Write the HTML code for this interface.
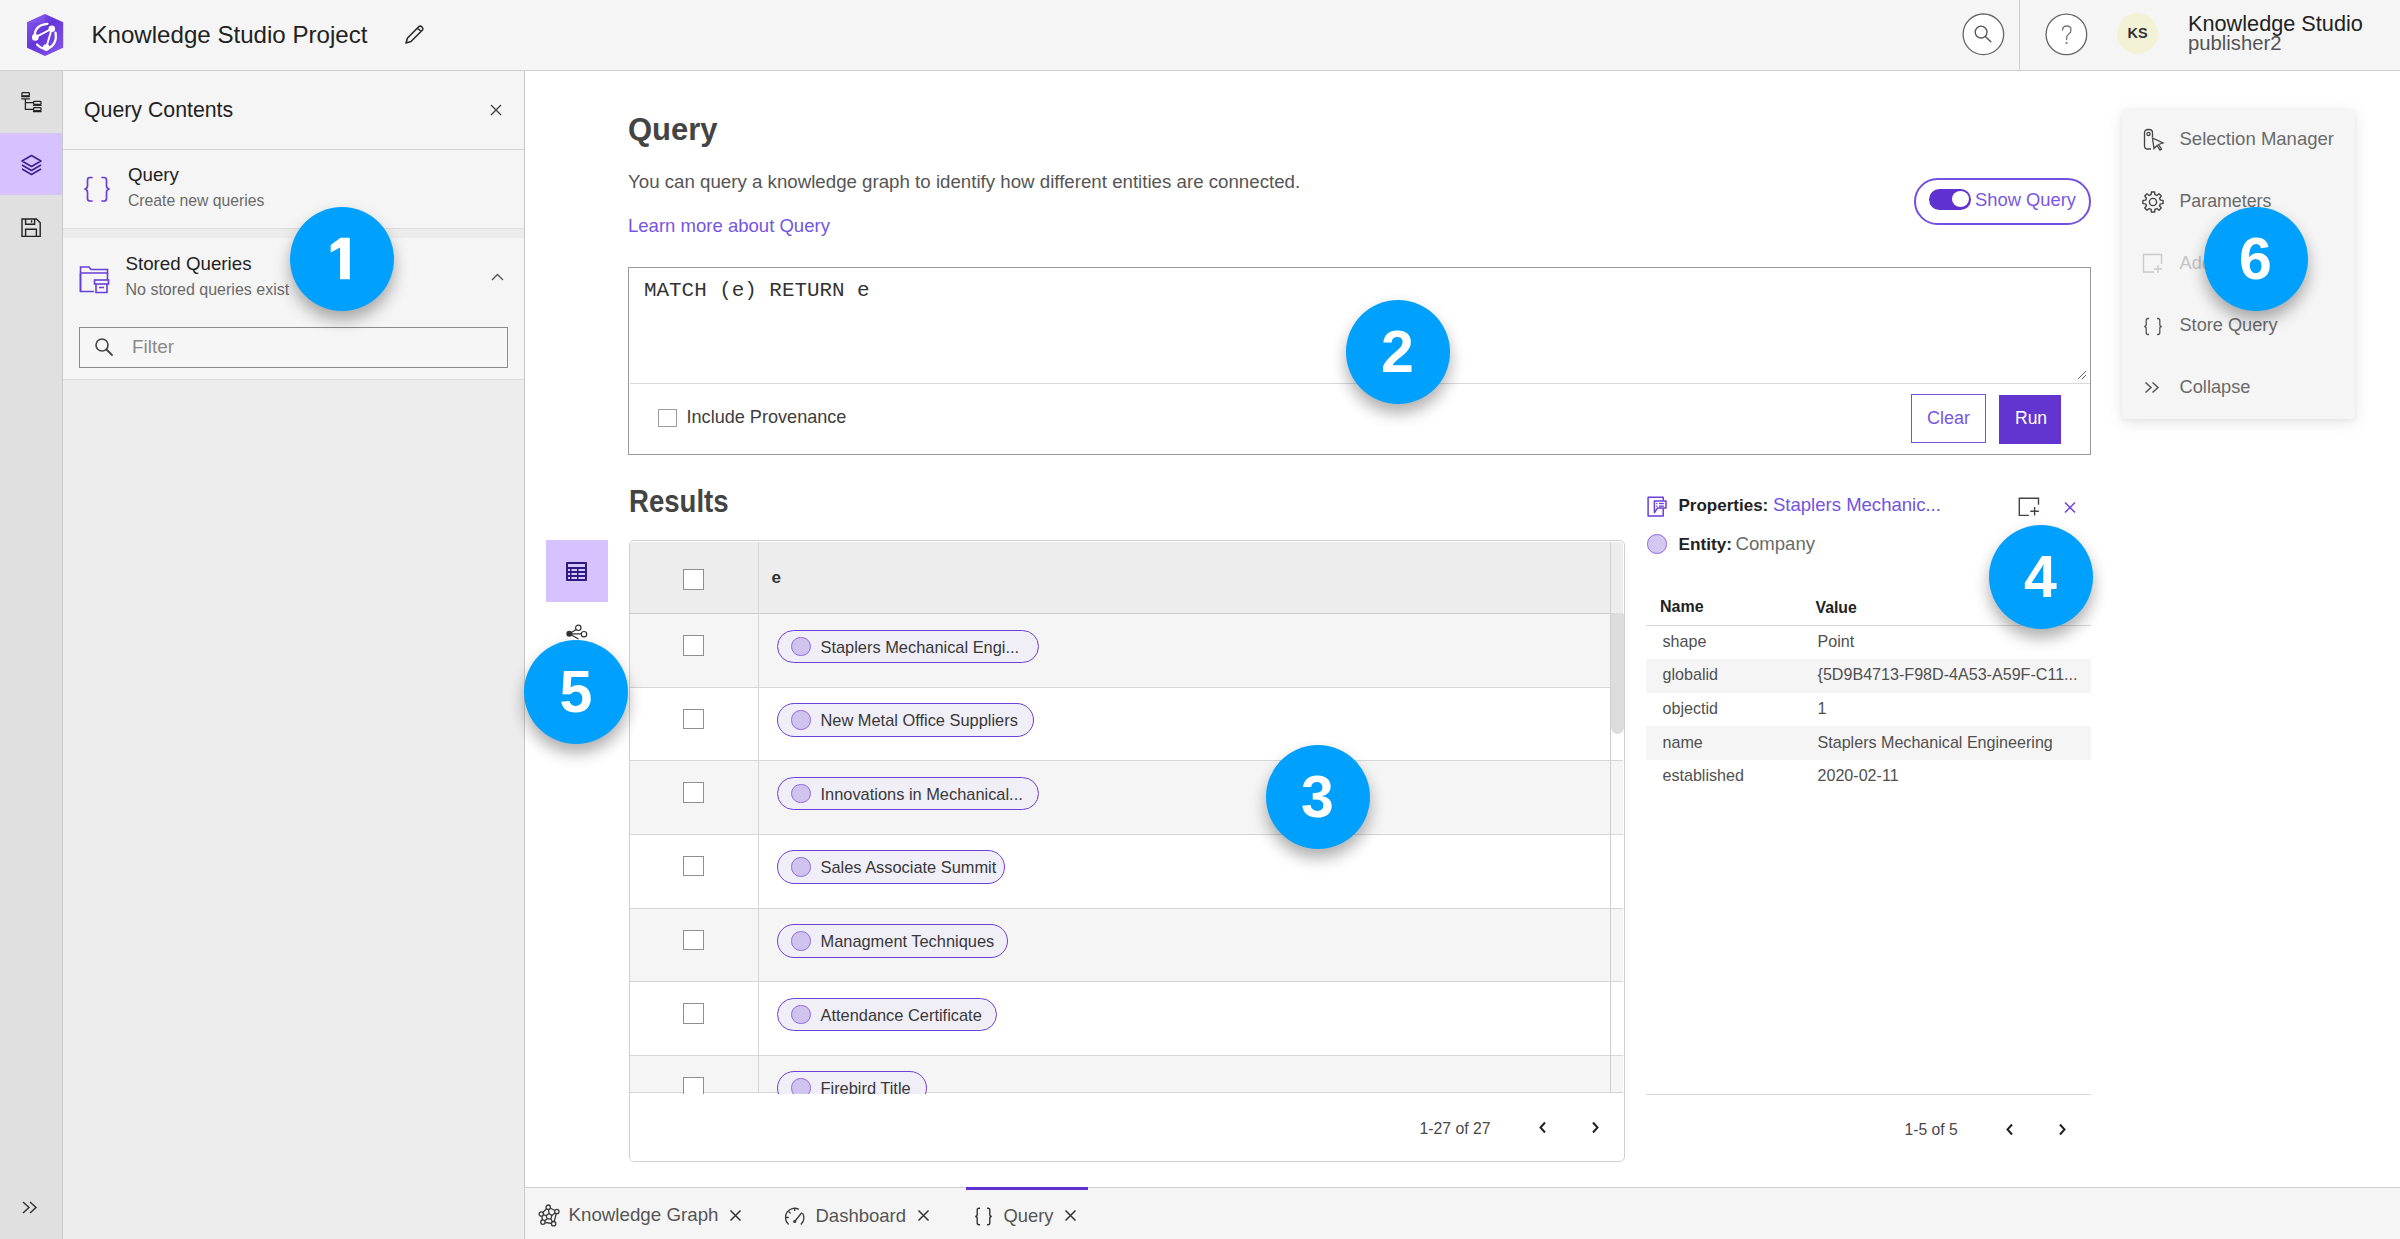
<!DOCTYPE html>
<html><head><meta charset="utf-8"><title>Knowledge Studio Project - Query</title>
<style>
html,body{margin:0;padding:0;}
body{width:2400px;height:1239px;position:relative;overflow:hidden;background:#fff;font-family:"Liberation Sans",sans-serif;color:#151515;}
.a{position:absolute;box-sizing:border-box;}
.t{position:absolute;line-height:1;white-space:nowrap;}
svg.a{overflow:visible;}
</style></head><body>
<div class="a" style="left:0px;top:0px;width:2400px;height:70px;background:#f5f5f5;"></div><div class="a" style="left:0px;top:70px;width:2400px;height:1px;background:#cfcfcf;"></div><div class="a" style="left:0px;top:71px;width:62px;height:1168px;background:#e0e0e0;"></div><div class="a" style="left:62px;top:71px;width:1px;height:1168px;background:#c9c9c9;"></div><div class="a" style="left:0px;top:133px;width:62px;height:62px;background:#d5c2ff;"></div><div class="a" style="left:63px;top:71px;width:461px;height:1168px;background:#ededed;"></div><div class="a" style="left:63px;top:71px;width:461px;height:308px;background:#f5f5f5;"></div><div class="a" style="left:63px;top:149px;width:461px;height:1px;background:#d4d4d4;"></div><div class="a" style="left:63px;top:228px;width:461px;height:1px;background:#dcdcdc;"></div><div class="a" style="left:63px;top:229px;width:461px;height:9px;background:#ececec;"></div><div class="a" style="left:63px;top:379px;width:461px;height:1px;background:#dcdcdc;"></div><div class="a" style="left:524px;top:71px;width:1px;height:1168px;background:#c9c9c9;"></div><div class="a" style="left:525px;top:1187px;width:1875px;height:52px;background:#f5f5f5;"></div><div class="a" style="left:525px;top:1187px;width:1875px;height:1px;background:#cfcfcf;"></div><svg class="a" style="left:26px;top:13px;" width="39" height="44" viewBox="0 0 39 44">
<defs><linearGradient id="lg" x1="0" y1="0" x2="1" y2="1">
<stop offset="0" stop-color="#8a5cf0"/><stop offset="0.45" stop-color="#6536d8"/><stop offset="1" stop-color="#8759ef"/></linearGradient></defs>
<path d="M19 1 L37.2 9.3 L37.2 34.7 L19 43 L1 34.7 L1 9.3 Z" fill="url(#lg)"/>
<path d="M19 1 L19 10 L1 9.3 Z" fill="#9066f2" opacity="0.35"/>
<path d="M8.6 23.5 C8.5 16 13 11.5 21.5 10.8" stroke="#fff" stroke-width="2.2" fill="none" stroke-linecap="round"/>
<path d="M9.3 24.4 L25.8 15.7 L20.3 34.6" stroke="#fff" stroke-width="1.9" fill="none" stroke-linecap="round"/>
<path d="M29.5 19.5 C31 27 28 33.5 22 35.5 C18 36.5 14.5 35 11 31.5" stroke="#fff" stroke-width="2.2" fill="none" stroke-linecap="round"/>
<circle cx="9.3" cy="24.4" r="3.3" fill="#fff"/><circle cx="25.8" cy="15.7" r="3.3" fill="#fff"/><circle cx="20.3" cy="34.6" r="3.3" fill="#fff"/>
</svg><span class="t" style="left:91.5px;top:22.8px;font-size:24.1px;color:#222;">Knowledge Studio Project</span><svg class="a" style="left:403px;top:24px;" width="22" height="22" viewBox="0 0 22 22"><path d="M3 19 L4.5 14 L16 2.5 Q17.5 1.5 19 3 Q20.5 4.5 19.5 6 L8 17.5 Z M14.5 4 L18 7.5" stroke="#2b2b2b" stroke-width="1.6" fill="none" stroke-linejoin="round"/></svg><svg class="a" style="left:1962px;top:12.5px;" width="43" height="43" viewBox="0 0 43 43"><circle cx="21.4" cy="21.3" r="20.3" stroke="#666" stroke-width="1.3" fill="#fff"/><circle cx="19.1" cy="19.1" r="5.9" stroke="#555" stroke-width="1.3" fill="none"/><path d="M23.4 23.4 L28.8 28.8" stroke="#555" stroke-width="1.4" stroke-linecap="round"/></svg><div class="a" style="left:2019px;top:0px;width:1px;height:70px;background:#cfcfcf;"></div><svg class="a" style="left:2045px;top:13px;" width="43" height="43" viewBox="0 0 43 43"><circle cx="21.4" cy="21.4" r="20.3" stroke="#666" stroke-width="1.3" fill="#fff"/><path d="M17.6 17 Q17.6 13 21.8 13 Q26 13 26 17 Q26 19.5 23.5 21.2 Q21.6 22.6 21.6 25.5 V26.5" stroke="#777" stroke-width="1.3" fill="none" stroke-linecap="round"/><circle cx="21.6" cy="30" r="1.1" fill="#777"/></svg><div class="a" style="left:2117.3px;top:13px;width:40.5px;height:40.5px;background:#f3f1d6;border-radius:50%;"></div><span class="t" style="left:2127.5px;top:25.6px;font-size:14.5px;color:#333;font-weight:700;">KS</span><span class="t" style="left:2188.0px;top:12.7px;font-size:21.7px;color:#222;">Knowledge Studio</span><span class="t" style="left:2188.0px;top:33.3px;font-size:20.3px;color:#555;">publisher2</span><svg class="a" style="left:15px;top:85px;" width="32" height="35" viewBox="0 0 32 35"><g stroke="#222" stroke-width="1.3" fill="none"><rect x="6.9" y="7.7" width="7.4" height="3.2" rx="0.8"/><path d="M6.2 11.5 H14.9 M6.2 13.9 H14.9 M10.4 13.9 V24.4 H18 M10.4 17.7 H18"/><rect x="18.6" y="16.4" width="7.4" height="3" rx="0.8"/><path d="M17.9 20.3 H26.6"/><rect x="18.6" y="22.6" width="7.4" height="3" rx="0.8"/><path d="M17.9 26.6 H26.6"/></g></svg><svg class="a" style="left:20px;top:154px;" width="23" height="23" viewBox="0 0 23 23"><g stroke="#3b2090" stroke-width="1.5" fill="none" stroke-linejoin="round"><path d="M11.5 1.5 L21 7 L11.5 12.5 L2 7 Z"/><path d="M2 11 L11.5 16.5 L21 11"/><path d="M2 15 L11.5 20.5 L21 15"/></g></svg><svg class="a" style="left:21.3px;top:218.3px;" width="21" height="21" viewBox="0 0 21 21"><g stroke="#222" stroke-width="1.4" fill="none"><path d="M1 1 H15.5 L19.2 4.7 V18.4 H1 Z"/><path d="M4.6 1 V6.3 H13.6 V1"/><path d="M4.6 18.4 V11.3 H15.4 V18.4"/><path d="M10.6 2.3 V4.6"/></g></svg><svg class="a" style="left:21px;top:1200px;" width="18" height="16" viewBox="0 0 18 16"><path d="M2 2 L8 7.5 L2 13 M9 2 L15 7.5 L9 13" stroke="#333" stroke-width="1.5" fill="none"/></svg><span class="t" style="left:84.0px;top:99.8px;font-size:21.3px;color:#222;">Query Contents</span><svg class="a" style="left:489px;top:103px;" width="14" height="14" viewBox="0 0 14 14"><path d="M2 2 L12 12 M12 2 L2 12" stroke="#444" stroke-width="1.4"/></svg><svg class="a" style="left:83px;top:176px;" width="28" height="27" viewBox="0 0 28 27"><g stroke="#6a3ed8" stroke-width="1.7" fill="none" stroke-linecap="round"><path d="M9 1.5 H7 Q4.5 1.5 4.5 4 V10 Q4.5 12.5 1.5 13 Q4.5 13.5 4.5 16 V22.5 Q4.5 25 7 25 H9"/><path d="M19 1.5 H21 Q23.5 1.5 23.5 4 V10 Q23.5 12.5 26.5 13 Q23.5 13.5 23.5 16 V22.5 Q23.5 25 21 25 H19"/></g></svg><span class="t" style="left:128.0px;top:166.1px;font-size:18.7px;color:#222;">Query</span><span class="t" style="left:128.0px;top:193.0px;font-size:15.74px;color:#6a6a6a;">Create new queries</span><svg class="a" style="left:79px;top:265px;" width="32" height="29" viewBox="0 0 32 29"><g stroke="#6a3ed8" stroke-width="1.6" fill="none"><path d="M1.5 26.5 V2 H10 L12 4.5 H28.5 V8 H1.5"/><path d="M1.5 8 V26.5 H15"/><path d="M28.5 8 V15"/><rect x="15.5" y="15" width="14" height="4"/><path d="M17 19 V27.5 H28 V19 M20 22.5 H25"/></g></svg><span class="t" style="left:125.5px;top:254.8px;font-size:18.74px;color:#222;">Stored Queries</span><span class="t" style="left:125.5px;top:282.2px;font-size:16.0px;color:#6a6a6a;">No stored queries exist</span><svg class="a" style="left:490px;top:272px;" width="15" height="10" viewBox="0 0 15 10"><path d="M2 8 L7.5 2.5 L13 8" stroke="#555" stroke-width="1.4" fill="none"/></svg><div class="a" style="left:79px;top:327px;width:429px;height:41px;border:1.5px solid #8c8c8c;background:#f6f6f6;"></div><svg class="a" style="left:94px;top:337px;" width="20" height="20" viewBox="0 0 20 20"><circle cx="8" cy="8" r="6" stroke="#444" stroke-width="1.6" fill="none"/><path d="M12.5 12.5 L18 18" stroke="#444" stroke-width="1.8" stroke-linecap="round"/></svg><span class="t" style="left:132.0px;top:338.0px;font-size:18.9px;color:#8a8a8a;">Filter</span><span class="t" style="left:628.0px;top:114.3px;font-size:31px;color:#444;font-weight:700;">Query</span><span class="t" style="left:628.0px;top:172.6px;font-size:18.7px;color:#555;">You can query a knowledge graph to identify how different entities are connected.</span><span class="t" style="left:628.0px;top:216.5px;font-size:18.54px;color:#7656e0;">Learn more about Query</span><div class="a" style="left:1914px;top:178px;width:177px;height:46.5px;border:2px solid #7550df;border-radius:24px;"></div><div class="a" style="left:1929px;top:188.5px;width:42px;height:21px;background:#5f31d1;border-radius:11px;"></div><div class="a" style="left:1952px;top:191px;width:17px;height:16px;background:#fff;border-radius:50%;"></div><span class="t" style="left:1975.0px;top:190.5px;font-size:18.36px;color:#7a58e2;">Show Query</span><div class="a" style="left:628px;top:267px;width:1463px;height:188px;border:1.5px solid #9a9a9a;"></div><div class="a" style="left:629.5px;top:383px;width:1460px;height:1px;background:#d9d9d9;"></div><span class="t" style="left:644.0px;top:281.0px;font-size:20.9px;color:#333;font-family:'Liberation Mono',monospace;">MATCH (e) RETURN e</span><svg class="a" style="left:2075px;top:368px;" width="12" height="12" viewBox="0 0 12 12"><path d="M11 3 L3 11 M11 7 L7 11" stroke="#666" stroke-width="1"/></svg><div class="a" style="left:658px;top:408.5px;width:18.5px;height:18.5px;border:1.5px solid #9c9c9c;background:#fff;"></div><span class="t" style="left:686.5px;top:407.9px;font-size:18.1px;color:#3d3d3d;">Include Provenance</span><div class="a" style="left:1911px;top:394.3px;width:75px;height:49px;border:1.6px solid #7452de;background:#fff;"></div><span class="t" style="left:1927.0px;top:408.8px;font-size:18px;color:#7b55e3;">Clear</span><div class="a" style="left:1999px;top:394.5px;width:62px;height:49px;background:#6234d0;"></div><span class="t" style="left:2015.0px;top:410.1px;font-size:17.5px;color:#ffffff;">Run</span><span class="t" style="left:628.5px;top:486.3px;font-size:31.5px;color:#444;font-weight:700;transform:scaleX(0.875);transform-origin:0 0;">Results</span><div class="a" style="left:546px;top:540px;width:62px;height:62px;background:#d5c2ff;"></div><svg class="a" style="left:566px;top:562px;" width="21" height="19" viewBox="0 0 21 19"><rect x="0" y="0" width="21" height="19" rx="1" fill="#2e1a80"/><g fill="#d8c8ff"><rect x="2" y="2" width="17" height="3"/><rect x="2" y="7" width="2" height="2"/><rect x="5.5" y="7" width="5.5" height="2"/><rect x="12.5" y="7" width="6.5" height="2"/><rect x="2" y="11" width="2" height="2"/><rect x="5.5" y="11" width="5.5" height="2"/><rect x="12.5" y="11" width="6.5" height="2"/><rect x="2" y="15" width="2" height="2"/><rect x="5.5" y="15" width="5.5" height="2"/><rect x="12.5" y="15" width="6.5" height="2"/></g></svg><svg class="a" style="left:565px;top:623px;" width="24" height="19" viewBox="0 0 24 19"><g stroke="#333" stroke-width="1.2" fill="none"><circle cx="13.3" cy="4.8" r="2.7"/><circle cx="19" cy="11.2" r="2.7"/><path d="M4.3 10.8 L11.3 6.5 M4.3 10.8 H16.3 M4.3 10.8 L13.5 16"/></g><circle cx="4.3" cy="10.8" r="3" fill="#333"/></svg><div class="a" style="left:628.5px;top:540px;width:996px;height:622px;border:1.5px solid #cfcfcf;border-radius:5px;background:#fff;overflow:hidden;"></div><div class="a" style="left:630.0px;top:541.5px;width:993px;height:72px;background:#ededed;border-radius:4px 4px 0 0;"></div><div class="a" style="left:630.0px;top:612.5px;width:993px;height:1.5px;background:#cbcbcb;"></div><div class="a" style="left:630.0px;top:614px;width:993px;height:73.5px;background:#f5f5f5;"></div><div class="a" style="left:630.0px;top:686.5px;width:993px;height:1.5px;background:#d6d6d6;"></div><div class="a" style="left:630.0px;top:687.5px;width:993px;height:73.70000000000005px;background:#ffffff;"></div><div class="a" style="left:630.0px;top:760.2px;width:993px;height:1.5px;background:#d6d6d6;"></div><div class="a" style="left:630.0px;top:761.2px;width:993px;height:73.79999999999995px;background:#f5f5f5;"></div><div class="a" style="left:630.0px;top:834px;width:993px;height:1.5px;background:#d6d6d6;"></div><div class="a" style="left:630.0px;top:835px;width:993px;height:73.5px;background:#ffffff;"></div><div class="a" style="left:630.0px;top:907.5px;width:993px;height:1.5px;background:#d6d6d6;"></div><div class="a" style="left:630.0px;top:908.5px;width:993px;height:73.5px;background:#f5f5f5;"></div><div class="a" style="left:630.0px;top:981px;width:993px;height:1.5px;background:#d6d6d6;"></div><div class="a" style="left:630.0px;top:982px;width:993px;height:73.59999999999991px;background:#ffffff;"></div><div class="a" style="left:630.0px;top:1054.6px;width:993px;height:1.5px;background:#d6d6d6;"></div><div class="a" style="left:630.0px;top:1055.6px;width:993px;height:37.40000000000009px;background:#f5f5f5;"></div><div class="a" style="left:630.0px;top:1092.3px;width:993px;height:1.2px;background:#d4d4d4;"></div><div class="a" style="left:758px;top:541.5px;width:1.2px;height:551px;background:#d6d6d6;"></div><div class="a" style="left:1609.8px;top:541.5px;width:1.2px;height:551px;background:#cfcfcf;"></div><div class="a" style="left:1611px;top:613px;width:12.5px;height:121px;background:#dcdcdc;border-radius:2px 2px 6.5px 6.5px;"></div><div class="a" style="left:683px;top:569px;width:20.5px;height:20.5px;border:1.4px solid #8f8f8f;background:#fff;"></div><span class="t" style="left:771.5px;top:569.3px;font-size:17px;color:#333;font-weight:700;">e</span><div class="a" style="left:683px;top:635.0px;width:20.5px;height:20.5px;border:1.4px solid #8f8f8f;background:#fff;"></div><div class="a" style="left:777px;top:629.9px;width:261.5px;height:33.3px;border:1.6px solid #6c42d8;border-radius:17px;background:#f0eef7;"></div><div class="a" style="left:791.3px;top:636.8px;width:19.4px;height:19.4px;border:1.6px solid #8a6ae4;border-radius:50%;background:#d0c4ee;"></div><span class="t" style="left:820.5px;top:638.5px;font-size:16.4px;color:#383838;">Staplers Mechanical Engi...</span><div class="a" style="left:683px;top:708.5px;width:20.5px;height:20.5px;border:1.4px solid #8f8f8f;background:#fff;"></div><div class="a" style="left:777px;top:703.4px;width:256.5px;height:33.3px;border:1.6px solid #6c42d8;border-radius:17px;background:#f0eef7;"></div><div class="a" style="left:791.3px;top:710.3px;width:19.4px;height:19.4px;border:1.6px solid #8a6ae4;border-radius:50%;background:#d0c4ee;"></div><span class="t" style="left:820.5px;top:712.0px;font-size:16.4px;color:#383838;">New Metal Office Suppliers</span><div class="a" style="left:683px;top:782.0px;width:20.5px;height:20.5px;border:1.4px solid #8f8f8f;background:#fff;"></div><div class="a" style="left:777px;top:776.9px;width:261.5px;height:33.3px;border:1.6px solid #6c42d8;border-radius:17px;background:#f0eef7;"></div><div class="a" style="left:791.3px;top:783.8px;width:19.4px;height:19.4px;border:1.6px solid #8a6ae4;border-radius:50%;background:#d0c4ee;"></div><span class="t" style="left:820.5px;top:785.5px;font-size:16.4px;color:#383838;">Innovations in Mechanical...</span><div class="a" style="left:683px;top:855.5px;width:20.5px;height:20.5px;border:1.4px solid #8f8f8f;background:#fff;"></div><div class="a" style="left:777px;top:850.4px;width:228px;height:33.3px;border:1.6px solid #6c42d8;border-radius:17px;background:#f0eef7;"></div><div class="a" style="left:791.3px;top:857.3px;width:19.4px;height:19.4px;border:1.6px solid #8a6ae4;border-radius:50%;background:#d0c4ee;"></div><span class="t" style="left:820.5px;top:859.0px;font-size:16.4px;color:#383838;">Sales Associate Summit</span><div class="a" style="left:683px;top:929.5px;width:20.5px;height:20.5px;border:1.4px solid #8f8f8f;background:#fff;"></div><div class="a" style="left:777px;top:924.4px;width:231px;height:33.3px;border:1.6px solid #6c42d8;border-radius:17px;background:#f0eef7;"></div><div class="a" style="left:791.3px;top:931.3px;width:19.4px;height:19.4px;border:1.6px solid #8a6ae4;border-radius:50%;background:#d0c4ee;"></div><span class="t" style="left:820.5px;top:933.0px;font-size:16.4px;color:#383838;">Managment Techniques</span><div class="a" style="left:683px;top:1003.0px;width:20.5px;height:20.5px;border:1.4px solid #8f8f8f;background:#fff;"></div><div class="a" style="left:777px;top:997.9px;width:220px;height:33.3px;border:1.6px solid #6c42d8;border-radius:17px;background:#f0eef7;"></div><div class="a" style="left:791.3px;top:1004.8px;width:19.4px;height:19.4px;border:1.6px solid #8a6ae4;border-radius:50%;background:#d0c4ee;"></div><span class="t" style="left:820.5px;top:1006.5px;font-size:16.4px;color:#383838;">Attendance Certificate</span><div class="a" style="left:683px;top:1076.5px;width:20.5px;height:20.5px;border:1.4px solid #8f8f8f;background:#fff;"></div><div class="a" style="left:777px;top:1071.4px;width:150px;height:33.3px;border:1.6px solid #6c42d8;border-radius:17px;background:#f0eef7;"></div><div class="a" style="left:791.3px;top:1078.3px;width:19.4px;height:19.4px;border:1.6px solid #8a6ae4;border-radius:50%;background:#d0c4ee;"></div><span class="t" style="left:820.5px;top:1080.0px;font-size:16.4px;color:#383838;">Firebird Title</span><div class="a" style="left:630.0px;top:1093.5px;width:993px;height:67px;background:#fff;border-radius:0 0 4px 4px;"></div><span class="t" style="left:1419.5px;top:1121.3px;font-size:15.8px;color:#484848;">1-27 of 27</span><svg class="a" style="left:1538px;top:1121px;" width="10" height="13" viewBox="0 0 10 13"><path d="M7 1.5 L2.5 6.5 L7 11.5" stroke="#222" stroke-width="2" fill="none"/></svg><svg class="a" style="left:1590px;top:1121px;" width="10" height="13" viewBox="0 0 10 13"><path d="M3 1.5 L7.5 6.5 L3 11.5" stroke="#222" stroke-width="2" fill="none"/></svg><svg class="a" style="left:1640px;top:490px;" width="30" height="30" viewBox="0 0 30 30"><g stroke="#6a3ed8" stroke-width="1.5" fill="none" stroke-linejoin="round"><path d="M23.2 10.5 V7.3 H8.1 V26 H23.2 V18.6"/><path d="M14.4 22.6 V11 H26 V18.1 H17.5 Z"/></g><g fill="#6a3ed8"><rect x="16.2" y="12.9" width="1.3" height="1.3"/><rect x="16.2" y="15.5" width="1.3" height="1.3"/><rect x="19" y="12.9" width="4.8" height="1.3"/><rect x="19" y="15.5" width="4.8" height="1.3"/></g></svg><span class="t" style="left:1678.5px;top:497.4px;font-size:17px;color:#222;font-weight:700;">Properties:</span><span class="t" style="left:1773.0px;top:496.1px;font-size:18.54px;color:#7352df;">Staplers Mechanic...</span><svg class="a" style="left:2017px;top:496px;" width="24" height="22" viewBox="0 0 24 22"><g stroke="#444" stroke-width="1.4" fill="none"><path d="M11.8 19.4 H2.3 V2.3 H21.5 V8.8"/><path d="M17.6 11 V19.6 M13.3 15.3 H21.9"/></g></svg><svg class="a" style="left:2063px;top:501px;" width="14" height="13" viewBox="0 0 14 13"><path d="M2 1.5 L12 11.5 M12 1.5 L2 11.5" stroke="#6e45e0" stroke-width="1.5"/></svg><div class="a" style="left:1647px;top:534px;width:19.5px;height:19.5px;border:1.6px solid #8a6ae4;border-radius:50%;background:#d4c8f2;"></div><span class="t" style="left:1678.5px;top:536.4px;font-size:17.2px;color:#222;font-weight:700;">Entity:</span><span class="t" style="left:1735.5px;top:535.3px;font-size:18.6px;color:#6a6a6a;">Company</span><span class="t" style="left:1660.0px;top:599.4px;font-size:16px;color:#222;font-weight:700;">Name</span><span class="t" style="left:1815.5px;top:599.5px;font-size:15.8px;color:#222;font-weight:700;">Value</span><div class="a" style="left:1646px;top:624.5px;width:445px;height:1.2px;background:#d9d9d9;"></div><span class="t" style="left:1662.5px;top:632.8px;font-size:16.1px;color:#505050;">shape</span><span class="t" style="left:1817.5px;top:632.8px;font-size:16.1px;color:#505050;">Point</span><div class="a" style="left:1646px;top:659.2px;width:445px;height:33.59999999999991px;background:#f5f5f5;"></div><span class="t" style="left:1662.5px;top:666.3px;font-size:16.1px;color:#505050;">globalid</span><span class="t" style="left:1817.5px;top:666.3px;font-size:16.1px;color:#505050;">{5D9B4713-F98D-4A53-A59F-C11...</span><span class="t" style="left:1662.5px;top:699.9px;font-size:16.1px;color:#505050;">objectid</span><span class="t" style="left:1817.5px;top:699.9px;font-size:16.1px;color:#505050;">1</span><div class="a" style="left:1646px;top:726.4px;width:445px;height:33.80000000000007px;background:#f5f5f5;"></div><span class="t" style="left:1662.5px;top:733.5px;font-size:16.1px;color:#505050;">name</span><span class="t" style="left:1817.5px;top:733.5px;font-size:16.1px;color:#505050;">Staplers Mechanical Engineering</span><span class="t" style="left:1662.5px;top:767.3px;font-size:16.1px;color:#505050;">established</span><span class="t" style="left:1817.5px;top:767.3px;font-size:16.1px;color:#505050;">2020-02-11</span><div class="a" style="left:1646px;top:1093.5px;width:445px;height:1.2px;background:#d9d9d9;"></div><span class="t" style="left:1904.5px;top:1122.4px;font-size:15.7px;color:#484848;">1-5 of 5</span><svg class="a" style="left:2005px;top:1122.5px;" width="10" height="13" viewBox="0 0 10 13"><path d="M7 1.5 L2.5 6.5 L7 11.5" stroke="#222" stroke-width="2" fill="none"/></svg><svg class="a" style="left:2057px;top:1122.5px;" width="10" height="13" viewBox="0 0 10 13"><path d="M3 1.5 L7.5 6.5 L3 11.5" stroke="#222" stroke-width="2" fill="none"/></svg><div class="a" style="left:2122px;top:109px;width:232.5px;height:309.5px;background:#f5f5f5;border-radius:3px;box-shadow:0 4px 16px rgba(0,0,0,0.10),0 1px 4px rgba(0,0,0,0.05);"></div><svg class="a" style="left:2142px;top:128px;" width="24" height="23" viewBox="0 0 24 23"><g stroke="#444" stroke-width="1.3" fill="none"><path d="M9 21 H5.5 Q2.5 21 2.5 18 V5 Q2.5 1.5 6 1.5 H7 Q10.5 1.5 10.5 5 V9"/><circle cx="6.5" cy="6" r="1.6"/><path d="M10.5 10 L21 15 L16.5 16.5 L19.5 21 L18 22 L15 17.5 L12 20.5 Z"/></g></svg><span class="t" style="left:2179.5px;top:129.8px;font-size:18.54px;color:#6a6a6a;">Selection Manager</span><svg class="a" style="left:2141px;top:190px;" width="24" height="24" viewBox="0 0 24 24"><g stroke="#444" stroke-width="1.4" fill="none" stroke-linejoin="round"><circle cx="12" cy="12" r="3.6"/><path d="M19.36 10.11 L22.07 10.40 L22.07 13.60 L19.36 13.89 L18.54 15.87 L20.25 18.00 L18.00 20.25 L15.87 18.54 L13.89 19.36 L13.60 22.07 L10.40 22.07 L10.11 19.36 L8.13 18.54 L6.00 20.25 L3.75 18.00 L5.46 15.87 L4.64 13.89 L1.93 13.60 L1.93 10.40 L4.64 10.11 L5.46 8.13 L3.75 6.00 L6.00 3.75 L8.13 5.46 L10.11 4.64 L10.40 1.93 L13.60 1.93 L13.89 4.64 L15.87 5.46 L18.00 3.75 L20.25 6.00 L18.54 8.13 Z"/></g></svg><span class="t" style="left:2179.5px;top:192.9px;font-size:17.8px;color:#6a6a6a;">Parameters</span><svg class="a" style="left:2142px;top:253px;" width="23" height="21" viewBox="0 0 23 21"><g stroke="#c9c9c9" stroke-width="1.4" fill="none"><path d="M12 19 H1.5 V1.5 H19.5 V11"/><path d="M16 12 V20 M12 16 H20"/></g></svg><span class="t" style="left:2179.5px;top:254.1px;font-size:18.2px;color:#c4c4c4;">Add to Map</span><svg class="a" style="left:2143px;top:317px;" width="20" height="19" viewBox="0 0 20 19"><g stroke="#555" stroke-width="1.3" fill="none"><path d="M6 1.5 H5 Q3.2 1.5 3.2 3.5 V7.5 Q3.2 9.5 1.2 9.5 Q3.2 9.5 3.2 11.5 V15.5 Q3.2 17.5 5 17.5 H6"/><path d="M14 1.5 H15 Q16.8 1.5 16.8 3.5 V7.5 Q16.8 9.5 18.8 9.5 Q16.8 9.5 16.8 11.5 V15.5 Q16.8 17.5 15 17.5 H14"/></g></svg><span class="t" style="left:2179.5px;top:316.3px;font-size:18.18px;color:#6a6a6a;">Store Query</span><svg class="a" style="left:2144px;top:381px;" width="17" height="13" viewBox="0 0 17 13"><path d="M1.5 1.5 L7 6.5 L1.5 11.5 M8.5 1.5 L14 6.5 L8.5 11.5" stroke="#555" stroke-width="1.5" fill="none"/></svg><span class="t" style="left:2179.5px;top:377.9px;font-size:18.25px;color:#6a6a6a;">Collapse</span><svg class="a" style="left:538px;top:1204px;" width="22" height="22" viewBox="0 0 22 22"><g stroke="#3a3a3a" stroke-width="1.3" fill="none"><path d="M10.2 3 L18.8 7.5 L15.6 19.7 L4.9 18.1 L3.3 10 Z"/><path d="M11 9.5 L13.9 11.6 L12.8 14.9 L9.2 14.9 L8.1 11.6 Z M10.2 3 L11 9.5 M18.8 7.5 L13.9 11.6 M15.6 19.7 L12.8 14.9 M4.9 18.1 L9.2 14.9 M3.3 10 L8.1 11.6"/></g><g stroke="#3a3a3a" stroke-width="1.3" fill="#f5f5f5"><circle cx="10.2" cy="3.2" r="2.2"/><circle cx="18.8" cy="7.5" r="2.2"/><circle cx="3.3" cy="10" r="2.2"/><circle cx="4.9" cy="18.1" r="2.2"/><circle cx="15.6" cy="19.7" r="2.2"/></g></svg><span class="t" style="left:568.5px;top:1206.3px;font-size:18.74px;color:#555;">Knowledge Graph</span><svg class="a" style="left:728px;top:1208px;" width="15" height="15" viewBox="0 0 15 15"><path d="M2.5 2.5 L12.5 12.5 M12.5 2.5 L2.5 12.5" stroke="#333" stroke-width="1.5"/></svg><svg class="a" style="left:783px;top:1205px;" width="24" height="22" viewBox="0 0 24 22"><g stroke="#3a3a3a" stroke-width="1.3" fill="none" stroke-linecap="round"><path d="M5.2 19 A9.2 9.2 0 0 1 15.5 4.1"/><path d="M19.8 8.5 A9.2 9.2 0 0 1 18.2 19"/><path d="M11.7 3.5 V5.5 M3.3 12.5 H5.3 M5.8 6.6 L7.2 8"/><path d="M11.7 16.5 L18.5 8"/></g><circle cx="11.7" cy="16.5" r="1.6" fill="#3a3a3a"/></svg><span class="t" style="left:815.5px;top:1206.5px;font-size:18.5px;color:#555;">Dashboard</span><svg class="a" style="left:916px;top:1208px;" width="15" height="15" viewBox="0 0 15 15"><path d="M2.5 2.5 L12.5 12.5 M12.5 2.5 L2.5 12.5" stroke="#333" stroke-width="1.5"/></svg><div class="a" style="left:966px;top:1187px;width:122px;height:3px;background:#5f31d1;"></div><svg class="a" style="left:974px;top:1207px;" width="20" height="19" viewBox="0 0 20 19"><g stroke="#333" stroke-width="1.4" fill="none"><path d="M6 1.2 H5 Q3.2 1.2 3.2 3.2 V7.5 Q3.2 9.5 1.2 9.5 Q3.2 9.5 3.2 11.5 V15.8 Q3.2 17.8 5 17.8 H6"/><path d="M13 1.2 H14 Q15.8 1.2 15.8 3.2 V7.5 Q15.8 9.5 17.8 9.5 Q15.8 9.5 15.8 11.5 V15.8 Q15.8 17.8 14 17.8 H13"/></g></svg><span class="t" style="left:1003.5px;top:1206.7px;font-size:18.36px;color:#555;">Query</span><svg class="a" style="left:1063px;top:1208px;" width="15" height="15" viewBox="0 0 15 15"><path d="M2.5 2.5 L12.5 12.5 M12.5 2.5 L2.5 12.5" stroke="#333" stroke-width="1.5"/></svg><div class="a" style="left:289.5px;top:207px;width:104px;height:104px;border-radius:50%;background:#00a0ff;box-shadow:0 9px 16px rgba(0,0,0,0.32);"></div><svg class="a" style="left:289.5px;top:207px" width="104" height="104" viewBox="289.5 207 104 104"><path d="M330.2 245 L340 237.8 L349.3 237.8 L349.3 279.2 L339.6 279.2 L339.6 247.5 L330.2 252.6 Z" fill="#fff"/></svg><div class="a" style="left:1345.5px;top:300px;width:104px;height:104px;border-radius:50%;background:#00a0ff;box-shadow:0 9px 16px rgba(0,0,0,0.32);"></div><span class="t" style="left:1377.5px;top:322.8px;font-size:59px;color:#ffffff;font-weight:700;width:40px;text-align:center;">2</span><div class="a" style="left:1265.5px;top:745px;width:104px;height:104px;border-radius:50%;background:#00a0ff;box-shadow:0 9px 16px rgba(0,0,0,0.32);"></div><span class="t" style="left:1297.5px;top:767.8px;font-size:59px;color:#ffffff;font-weight:700;width:40px;text-align:center;">3</span><div class="a" style="left:1988.5px;top:525px;width:104px;height:104px;border-radius:50%;background:#00a0ff;box-shadow:0 9px 16px rgba(0,0,0,0.32);"></div><span class="t" style="left:2020.5px;top:547.8px;font-size:59px;color:#ffffff;font-weight:700;width:40px;text-align:center;">4</span><div class="a" style="left:524px;top:640px;width:104px;height:104px;border-radius:50%;background:#00a0ff;box-shadow:0 9px 16px rgba(0,0,0,0.32);"></div><span class="t" style="left:556.0px;top:662.8px;font-size:59px;color:#ffffff;font-weight:700;width:40px;text-align:center;">5</span><div class="a" style="left:2203.5px;top:207px;width:104px;height:104px;border-radius:50%;background:#00a0ff;box-shadow:0 9px 16px rgba(0,0,0,0.32);"></div><span class="t" style="left:2235.5px;top:229.8px;font-size:59px;color:#ffffff;font-weight:700;width:40px;text-align:center;">6</span></body></html>
